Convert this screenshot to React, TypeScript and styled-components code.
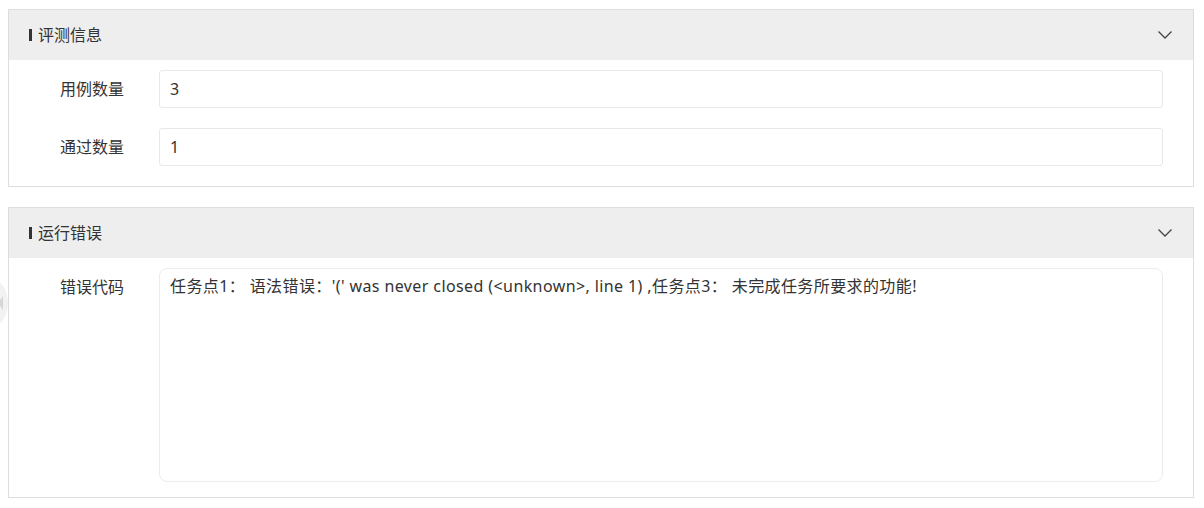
import React from "react";
import styled, { createGlobalStyle } from "styled-components";

const Global = createGlobalStyle`
  html, body { margin: 0; padding: 0; background: #ffffff; }
  body {
    font-family: "Noto Sans", "Noto Sans CJK SC", sans-serif;
    color: #333333;
  }
  * { box-sizing: border-box; }
`;

const Page = styled.div`
  position: relative;
  padding: 9px 10px 0 8px;
  display: flex;
  flex-direction: column;
  gap: 20px;
`;

const SideHandle = styled.div`
  position: absolute;
  left: -22px;
  top: 280px;
  width: 30px;
  height: 46px;
  border-radius: 50%;
  background: #f2f2f2;
  &::after {
    content: "";
    position: absolute;
    right: 5px;
    top: 16px;
    border-top: 7px solid transparent;
    border-bottom: 7px solid transparent;
    border-right: 5px solid #d6d6d6;
  }
`;

const Card = styled.section`
  border: 1px solid #dddddd;
  background: #ffffff;
`;

const CardHeader = styled.header`
  height: 50px;
  background: #eeeeee;
  display: flex;
  align-items: center;
  padding: 0 20px 0 20px;
`;

const TitleBar = styled.span`
  width: 3px;
  height: 12px;
  background: #333333;
  margin-right: 6px;
`;

const Title = styled.h3`
  margin: 0;
  flex: 1;
  font-size: 16px;
  font-weight: 400;
  color: #333333;
  line-height: 20px;
`;

const Chevron = styled.svg`
  width: 16px;
  height: 10px;
`;

const CardBody = styled.div<{ $bottom: number }>`
  padding: 10px 30px ${(p) => p.$bottom}px 0;
  display: flex;
  flex-direction: column;
  gap: 20px;
`;

const Row = styled.div`
  display: grid;
  grid-template-columns: 150px 1fr;
  align-items: start;
`;

const Label = styled.label`
  padding-left: 51px;
  font-size: 16px;
  line-height: 38px;
  color: #333333;
`;

const Field = styled.div`
  height: 38px;
  border: 1px solid #e8e8e8;
  border-radius: 3px;
  padding: 0 10px;
  font-size: 16px;
  line-height: 36px;
  color: #333333;
`;

const TextBox = styled.div`
  height: 214px;
  border: 1px solid #ececec;
  border-radius: 8px;
  padding: 6px 10px;
  font-size: 16px;
  line-height: 22px;
  letter-spacing: 0.4px;
  color: #333333;
  white-space: pre-wrap;
`;

const ChevronIcon = () => (
  <Chevron viewBox="0 0 16 10">
    <polyline points="1.5,1.5 8,8 14.5,1.5" fill="none" stroke="#444" strokeWidth="1.3" />
  </Chevron>
);

export default function App() {
  return (
    <>
      <Global />
      <Page>
        <SideHandle />
        <Card>
          <CardHeader>
            <TitleBar />
            <Title>评测信息</Title>
            <ChevronIcon />
          </CardHeader>
          <CardBody $bottom={20}>
            <Row>
              <Label>用例数量</Label>
              <Field>3</Field>
            </Row>
            <Row>
              <Label>通过数量</Label>
              <Field>1</Field>
            </Row>
          </CardBody>
        </Card>
        <Card>
          <CardHeader>
            <TitleBar />
            <Title>运行错误</Title>
            <ChevronIcon />
          </CardHeader>
          <CardBody $bottom={15}>
            <Row>
              <Label>错误代码</Label>
              <TextBox>任务点1： 语法错误：'(' was never closed (&lt;unknown&gt;, line 1) ,任务点3： 未完成任务所要求的功能!</TextBox>
            </Row>
          </CardBody>
        </Card>
      </Page>
    </>
  );
}
